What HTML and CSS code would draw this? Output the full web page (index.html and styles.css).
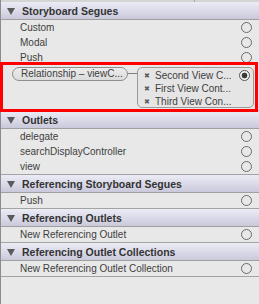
FILE: index.html
```html
<!DOCTYPE html>
<html lang="en">
<head>
  <meta charset="UTF-8">
  <meta name="viewport" content="width=device-width, initial-scale=1.0">
  <title>Connections Inspector</title>
  <link rel="stylesheet" href="styles.css">
</head>
<body>
  <div class="inspector">
    <div class="topbar"><span class="divider"></span></div>

    <!-- Storyboard Segues -->
    <section class="group">
      <div class="group-head"><span class="disclosure"></span>Storyboard Segues</div>
      <ul class="rows">
        <li class="row"><span class="label">Custom</span><span class="well"></span></li>
        <li class="row"><span class="label">Modal</span><span class="well"></span></li>
        <li class="row"><span class="label">Push</span><span class="well"></span></li>
        <li class="row relation">
          <span class="pill">Relationship – viewC...</span>
          <span class="wire"></span>
          <div class="targets">
            <div class="target"><span class="remove">✖</span><span class="label">Second View C...</span><span class="well on"></span></div>
            <div class="target"><span class="remove">✖</span><span class="label">First View Cont...</span></div>
            <div class="target"><span class="remove">✖</span><span class="label">Third View Con...</span></div>
          </div>
          <div class="highlight"></div>
        </li>
      </ul>
    </section>

    <!-- Outlets -->
    <section class="group">
      <div class="group-head"><span class="disclosure"></span>Outlets</div>
      <ul class="rows">
        <li class="row"><span class="label">delegate</span><span class="well"></span></li>
        <li class="row"><span class="label">searchDisplayController</span><span class="well"></span></li>
        <li class="row"><span class="label">view</span><span class="well"></span></li>
      </ul>
    </section>

    <section class="group">
      <div class="group-head"><span class="disclosure"></span>Referencing Storyboard Segues</div>
      <ul class="rows">
        <li class="row"><span class="label">Push</span><span class="well"></span></li>
      </ul>
    </section>

    <section class="group">
      <div class="group-head"><span class="disclosure"></span>Referencing Outlets</div>
      <ul class="rows">
        <li class="row"><span class="label">New Referencing Outlet</span><span class="well"></span></li>
      </ul>
    </section>

    <section class="group">
      <div class="group-head"><span class="disclosure"></span>Referencing Outlet Collections</div>
      <ul class="rows">
        <li class="row"><span class="label">New Referencing Outlet Collection</span><span class="well"></span></li>
      </ul>
    </section>
  </div>
</body>
</html>
```

FILE: styles.css
```css
html, body {
  width: 100%;
  height: 100%;
  padding: 0;
  margin: 0;
}

body {
  background: #e8e8e8;
  font-family: "Liberation Sans", Arial, sans-serif;
  color: #3e3e3e;
}

ul {
  list-style: none;
  margin: 0;
  padding: 0;
}

.inspector {
  height: 100%;
  border-left: 1px solid #8c8c8c;
  box-sizing: border-box;
}

.topbar {
  height: 2px;
  background: #d4d4d4;
  position: relative;
}

.topbar .divider {
  position: absolute;
  left: 193px;
  top: 0;
  width: 1px;
  height: 2px;
  background: #a8a8a8;
}

/* section header */
.group {
  border-bottom: 1px solid #a3a3a3;
}

.group-head {
  display: flex;
  align-items: center;
  height: 17px;
  border-bottom: 1px solid #a0a0a0;
  background: linear-gradient(#ececf6, #d9d9e8 55%, #c9c9db);
  font-size: 10.5px;
  font-weight: bold;
  color: #333;
  white-space: nowrap;
  overflow: hidden;
}

.disclosure {
  width: 0;
  height: 0;
  margin: 1px 7px 0 6px;
  border-left: 4px solid transparent;
  border-right: 4px solid transparent;
  border-top: 7px solid #5a5a5a;
}

/* rows */
.row {
  display: flex;
  align-items: center;
  height: 15px;
  padding-left: 19px;
  font-size: 10px;
  white-space: nowrap;
}

.row .label {
  flex: 1;
}

.well {
  width: 9px;
  height: 9px;
  margin-right: 7px;
  border: 1px solid #6a6a6a;
  border-radius: 50%;
}

.well.on {
  position: relative;
  width: 9px;
  height: 9px;
  margin-right: 0;
  border-color: #555;
  background: radial-gradient(circle, #3a3a3a 0 2.6px, #f2f2f2 3.2px);
}

/* relationship segue */
.row.relation {
  position: relative;
  height: 45px;
  align-items: flex-start;
  padding-left: 11px;
}

.pill {
  margin-top: 2px;
  height: 12px;
  line-height: 12px;
  width: 106px;
  padding-left: 8px;
  border: 1px solid #8e8e8e;
  border-radius: 7px;
  background: linear-gradient(#ececec, #dcdcdc);
}

.wire {
  width: 9px;
  height: 1px;
  margin-top: 8px;
  background: #808080;
}

.targets {
  margin-top: 2px;
  width: 106px;
  height: 38px;
  padding: 1px 3px 0 6px;
  border: 1px solid #9a9a9a;
  border-radius: 5px;
  background: #e5e5e5;
}

.target {
  display: flex;
  align-items: center;
  height: 13px;
}

.remove {
  width: 11px;
  font-size: 7px;
  color: #5c5c5c;
}

.highlight {
  position: absolute;
  left: -1px;
  top: -3px;
  right: 1px;
  bottom: -2px;
  border: 3px solid #ff0000;
}
```
